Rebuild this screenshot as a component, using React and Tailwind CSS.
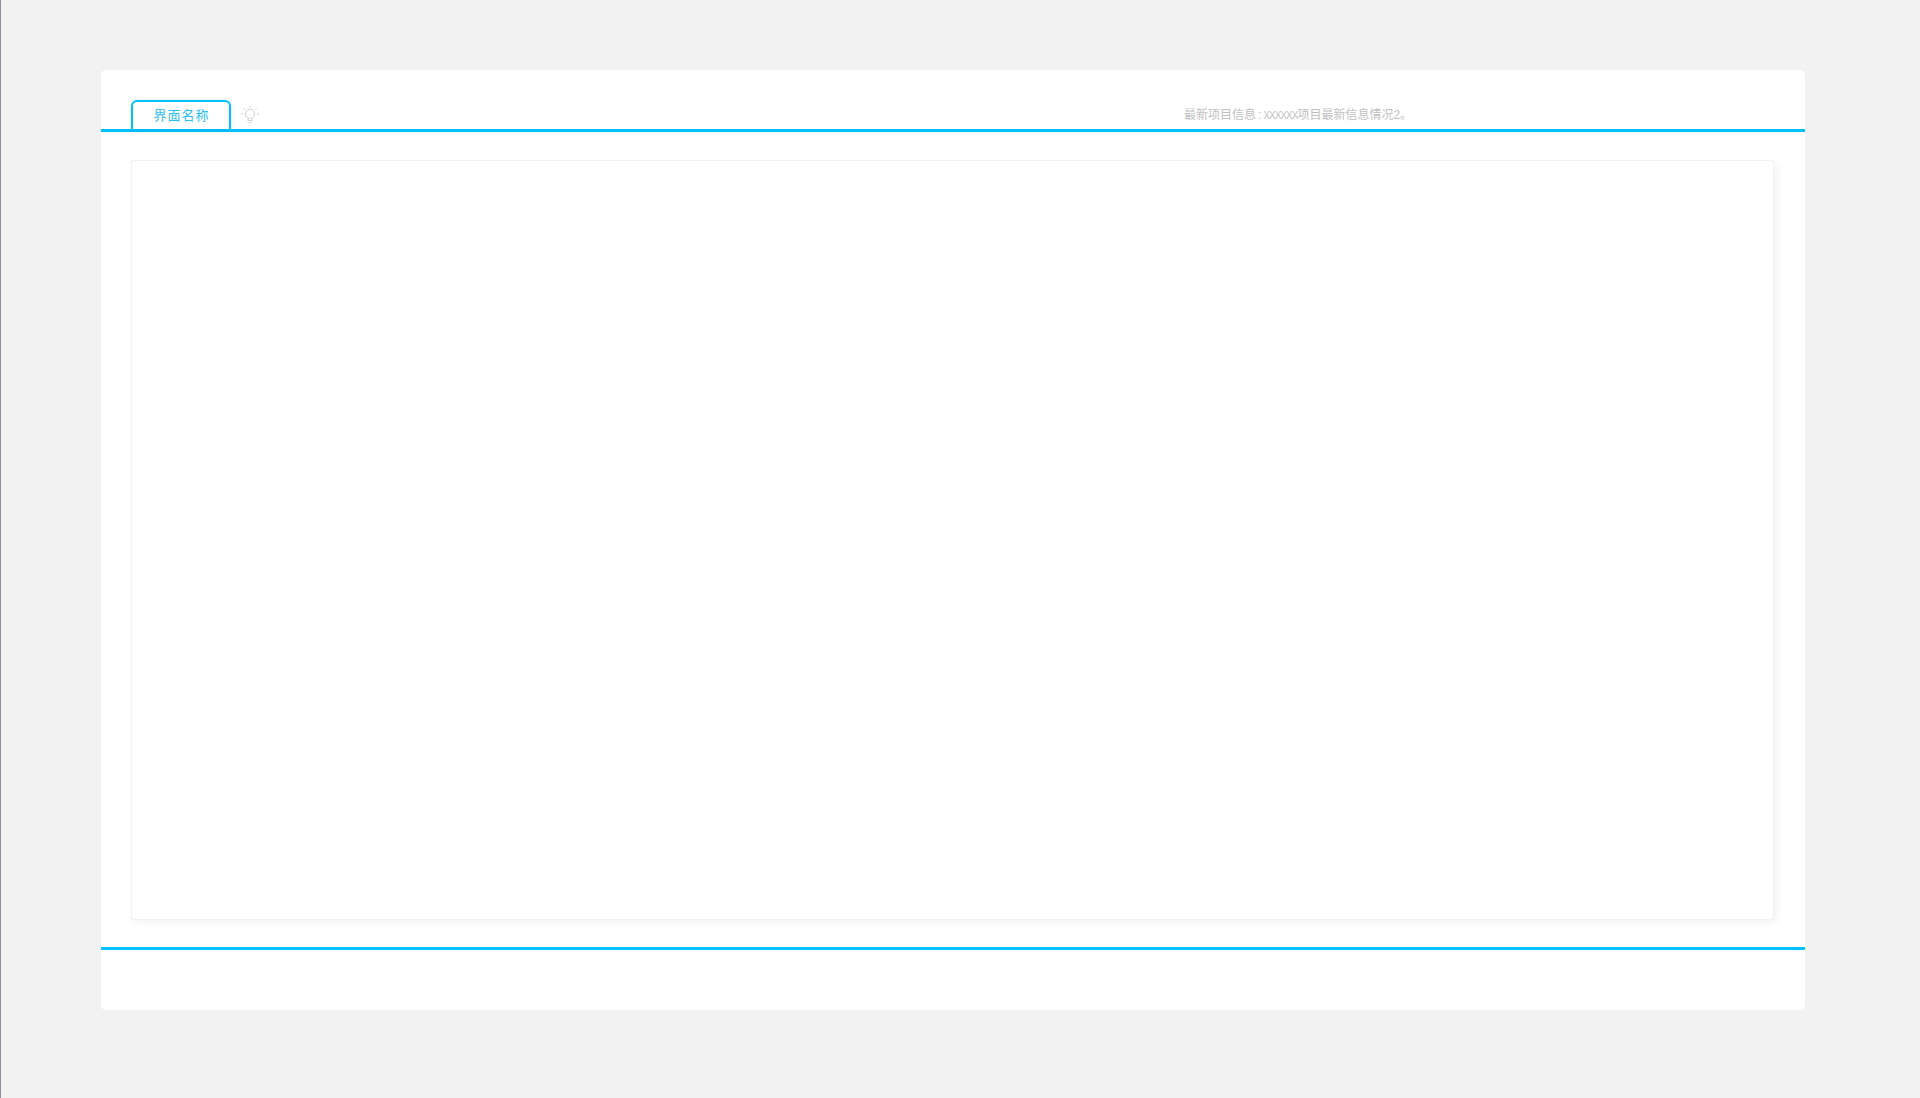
export default function App() {
  return (
    <div className="h-[1098px] w-[1920px] overflow-hidden bg-[#f2f2f2] border-l border-[#8f9399] pt-[70px] pl-[100px] font-['Liberation_Sans','Noto_Sans_CJK_SC',sans-serif]">
      <div className="flex h-[940px] w-[1704px] flex-col rounded-[5px] bg-white">
        <div className="flex h-[62px] shrink-0 items-end border-b-[3px] border-[#00c1ff] pl-[30px]">
          <div className="flex h-[29px] w-[100px] items-center justify-center rounded-t-[6px] border-2 border-b-0 border-[#00c1ff] bg-white pl-[1px] pt-[1px] text-[13px] tracking-[1px] text-[#2cc0f2] shadow-[0_0_6px_rgba(0,0,0,0.08)]">
            界面名称
          </div>
          <svg width="20" height="20" viewBox="0 0 20 20" fill="none" stroke="#d4d4d4" strokeWidth="1.2" className="ml-[9px] mb-[4px]">
            <circle cx="10" cy="9" r="4.5" />
            <path d="M8 13.5v2h4v-2M8.5 17.5h3" />
            <path d="M10 1v1.5M3.5 3.5l1 1M16.5 3.5l-1 1M1.5 9H3M17 9h1.5" strokeWidth="1.4" />
          </svg>
          <div className="ml-[924px] mb-[5px] text-[12px] leading-[16px] text-[#bfbfbf]">
            最新项目信息<span className="px-[2px]">:</span>
            <span className="text-[10px] tracking-[-1px]">XXXXXX</span>
            项目最新信息情况2。
          </div>
        </div>
        <div className="flex h-[815px] shrink-0 flex-col px-[30px] pt-[28px]">
          <div className="h-[760px] w-[1643px] rounded-[3px] border border-[#f2f2f2] bg-white shadow-[3px_3px_8px_rgba(0,0,0,0.05)]" />
        </div>
        <div className="grow border-t-[3px] border-[#00c1ff]" />
      </div>
    </div>
  );
}
